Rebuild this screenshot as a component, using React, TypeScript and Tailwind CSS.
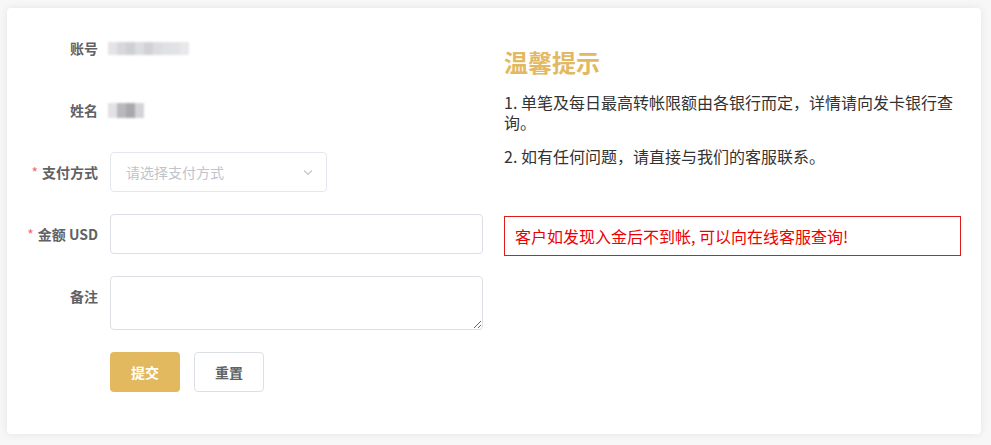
import React from "react";

const cjk = { fontFamily: '"Noto Sans CJK SC", "Liberation Sans", sans-serif' };

function Mosaic({ cells, h }: { cells: string[]; h: string }) {
  return (
    <div className={`flex blur-[1px] ${h}`}>
      {cells.map((c, i) => (
        <div key={i} className="w-[9px] h-full" style={{ background: c }} />
      ))}
    </div>
  );
}

function Label({ children, required, top }: { children: React.ReactNode; required?: boolean; top?: boolean }) {
  return (
    <div className={`w-[92px] shrink-0 whitespace-nowrap pr-3 text-right text-[14px] font-bold text-[#606266] ${top ? "pt-[10px] self-start" : ""}`}>
      {required && <span className="text-[#f56c6c] mr-1 font-normal">*</span>}
      {children}
    </div>
  );
}

export default function App() {
  return (
    <div className="min-h-screen bg-[#f7f7f7] pt-2 pl-[7px]" style={cjk}>
      <div className="w-[974px] h-[426px] bg-white rounded shadow-[0_0_8px_rgba(0,0,0,0.08)] flex pl-[11px] pt-5">
        {/* form */}
        <div className="w-[465px] shrink-0 flex flex-col gap-[22px]">
          <div className="flex items-center h-10">
            <Label>账号</Label>
            <div className="-ml-0.5">
              <Mosaic h="h-[13px]" cells={["#e4e4e6", "#d8d8dc", "#cfd0d4", "#dcdde0", "#d2d2d6", "#dcdde1", "#e0e1e4", "#e2e3e6", "#e8e8ea"]} />
            </div>
          </div>
          <div className="flex items-center h-10">
            <Label>姓名</Label>
            <div className="-ml-0.5">
              <Mosaic h="h-[15px]" cells={["#e2e2e4", "#b9b9bd", "#a9a9ad", "#d4d4d8"]} />
            </div>
          </div>
          <div className="flex items-center h-10">
            <Label required>支付方式</Label>
            <div className="w-[217px] h-10 border border-[#e4e7ed] rounded flex items-center justify-between pl-[15px] pr-3">
              <span className="text-[14px] text-[#c0c4cc]">请选择支付方式</span>
              <svg width="12" height="12" viewBox="0 0 12 12" fill="none">
                <path d="M2 4.5l4 4 4-4" stroke="#c0c4cc" strokeWidth="1.1" />
              </svg>
            </div>
          </div>
          <div className="flex items-center h-10">
            <Label required>金额 USD</Label>
            <input className="w-[374px] h-10 border border-[#dcdfe6] rounded outline-none px-[15px] text-[14px]" />
          </div>
          <div className="flex">
            <Label top>备注</Label>
            <textarea className="w-[374px] h-[54px] border border-[#dcdfe6] rounded outline-none px-[15px] py-[5px] text-[14px] block" />
          </div>
          <div className="flex items-center h-10 pl-[92px] gap-[14px]">
            <button className="w-[70px] h-10 rounded bg-[#e3b95f] text-white text-[14px] font-bold">提交</button>
            <button className="w-[70px] h-10 rounded border border-[#dcdfe6] bg-white text-[#606266] text-[14px] font-bold">重置</button>
          </div>
        </div>

        {/* tips */}
        <div className="w-[457px] ml-[21px] pt-[18px]">
          <h2 className="text-[24px] leading-8 font-bold text-[#e3b862]">温馨提示</h2>
          <p className="mt-[14px] text-[16px] leading-5 text-[#333]">1. 单笔及每日最高转帐限额由各银行而定，详情请向发卡银行查询。</p>
          <p className="mt-[14px] text-[16px] leading-5 text-[#333]">2. 如有任何问题，请直接与我们的客服联系。</p>
          <div className="mt-[50px] h-10 border border-[#e01b1b] flex items-center pl-[10px] text-[16px] text-[#ee0000]">
            客户如发现入金后不到帐, 可以向在线客服查询!
          </div>
        </div>
      </div>
    </div>
  );
}
